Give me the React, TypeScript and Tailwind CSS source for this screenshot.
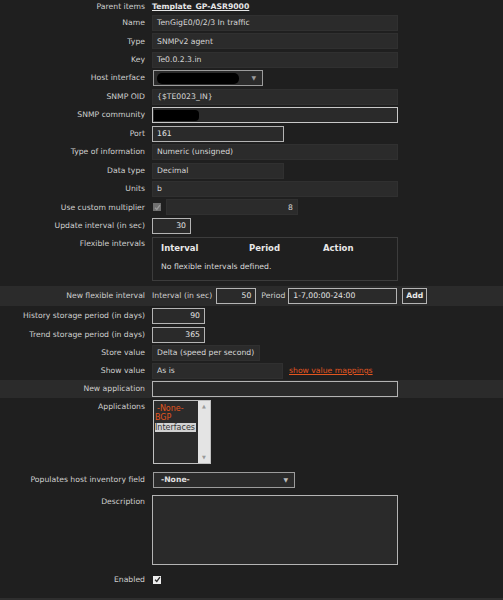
import clsx from 'clsx';
import type { ReactNode } from 'react';

const font = { fontFamily: '"DejaVu Sans", Verdana, sans-serif' };

function Row({
  label,
  top = false,
  className = '',
  children,
}: {
  label: ReactNode;
  top?: boolean;
  className?: string;
  children?: ReactNode;
}) {
  return (
    <div className={clsx('flex shrink-0', top ? 'items-start' : 'items-center', className)}>
      <div className={clsx('w-[145px] shrink-0 text-right text-[#cfcfcf]', top && 'pt-[3px]')}>{label}</div>
      <div className="ml-[7px] flex items-center">{children}</div>
    </div>
  );
}

function ReadOnly({ value, className = '', right = false }: { value: string; className?: string; right?: boolean }) {
  return (
    <div
      className={clsx(
        'flex h-[16px] items-center border border-[#303030] bg-[#2b2b2b] px-[4px] text-[#d6d6d6]',
        right && 'justify-end',
        className,
      )}
    >
      {value}
    </div>
  );
}

function Field({ value = '', className = '', right = false, children }: { value?: string; className?: string; right?: boolean; children?: ReactNode }) {
  return (
    <div
      className={clsx(
        'flex h-[16px] items-center border border-[#b4b4b4] bg-[#2a2a2a] px-[4px] text-[#e4e4e4]',
        right && 'justify-end',
        className,
      )}
    >
      {value}
      {children}
    </div>
  );
}

function Check({ disabled = false }: { disabled?: boolean }) {
  return (
    <div
      className={clsx(
        'flex h-[8px] w-[8px] items-center justify-center',
        disabled ? 'bg-[#6f6f6f]' : 'bg-[#eeeeee]',
      )}
    >
      <svg width="7" height="7" viewBox="0 0 8 8">
        <path d="M1.2 4.2 L3.2 6.2 L6.8 1.4" fill="none" stroke={disabled ? '#9a9a9a' : '#2a2a2a'} strokeWidth="1.5" />
      </svg>
    </div>
  );
}

export default function App() {
  return (
    <div className="h-[600px] w-[503px] overflow-hidden bg-[#1f1f1f] text-[7.7px] leading-none" style={font}>
      <div className="flex flex-col">
        <Row label="Parent items" className="h-[14px]">
          <span className="font-bold text-[#e6e6e6] underline">Template_GP-ASR9000</span>
        </Row>

        <div className="mt-[1px] flex flex-col gap-[2.45px]">
          <Row label="Name" className="h-[16px]">
            <ReadOnly value="TenGigE0/0/2/3 In traffic" className="w-[246px]" />
          </Row>
          <Row label="Type" className="h-[16px]">
            <ReadOnly value="SNMPv2 agent" className="w-[246px]" />
          </Row>
          <Row label="Key" className="h-[16px]">
            <ReadOnly value="Te0.0.2.3.in" className="w-[246px]" />
          </Row>
          <Row label="Host interface" className="h-[16px]">
            <div className="relative ml-[1px] flex h-[16px] w-[110px] items-center border border-[#9c9c9c] bg-[#2b2b2b]">
              <div className="ml-[3px] h-[11px] w-[82px] rounded-[5px] bg-black" />
              <span className="absolute right-[6px] top-[4px] text-[6px] text-[#9a9a9a]">▼</span>
            </div>
          </Row>
          <Row label="SNMP OID" className="h-[16px]">
            <ReadOnly value="{$TE0023_IN}" className="w-[246px]" />
          </Row>
          <Row label="SNMP community" className="h-[16px]">
            <div className="flex h-[16px] w-[246px] items-center border border-[#c8c8c8] bg-[#2a2a2a] pl-[1px]">
              <div className="h-[11px] w-[45px] rounded-r-[4px] bg-black" />
            </div>
          </Row>
          <Row label="Port" className="h-[16px]">
            <Field value="161" className="w-[132px]" />
          </Row>
          <Row label="Type of information" className="h-[16px]">
            <ReadOnly value="Numeric (unsigned)" className="w-[246px]" />
          </Row>
          <Row label="Data type" className="h-[16px]">
            <ReadOnly value="Decimal" className="w-[132px]" />
          </Row>
          <Row label="Units" className="h-[16px]">
            <ReadOnly value="b" className="w-[246px]" />
          </Row>
          <Row label="Use custom multiplier" className="h-[16px]">
            <div className="ml-[1px] flex items-center gap-[5px]">
              <Check disabled />
              <ReadOnly value="8" right className="w-[132px]" />
            </div>
          </Row>
          <Row label="Update interval (in sec)" className="h-[16px]">
            <Field value="30" right className="w-[39px]" />
          </Row>
        </div>

        <Row label="Flexible intervals" top className="mt-[3px]">
          <div className="flex h-[44px] w-[246px] flex-col border border-[#3c3c3c] pl-[8px] pt-[6px]">
            <div className="flex text-[8.5px] font-bold text-[#e8e8e8]">
              <span className="w-[88px]">Interval</span>
              <span className="w-[74px]">Period</span>
              <span>Action</span>
            </div>
            <div className="mt-[11px] text-[#dadada]">No flexible intervals defined.</div>
          </div>
        </Row>

        <Row label="New flexible interval" className="mt-[5px] h-[20px] bg-[#2b2b2b]">
          <span className="text-[#cfcfcf]">Interval (in sec)</span>
          <Field value="50" right className="ml-[4px] w-[40px]" />
          <span className="ml-[5px] text-[#cfcfcf]">Period</span>
          <Field value="1-7,00:00-24:00" className="ml-[3px] w-[109px]" />
          <div className="ml-[5px] flex h-[16px] w-[25px] items-center justify-center border border-[#b4b4b4] bg-[#2b2b2b] font-bold text-[#e8e8e8]">
            Add
          </div>
        </Row>

        <Row label="History storage period (in days)" className="mt-[2px] h-[16px]">
          <Field value="90" right className="w-[53px]" />
        </Row>
        <Row label="Trend storage period (in days)" className="mt-[3px] h-[16px]">
          <Field value="365" right className="w-[53px]" />
        </Row>
        <Row label="Store value" className="mt-[2px] h-[16px]">
          <ReadOnly value="Delta (speed per second)" className="w-[108px]" />
        </Row>
        <Row label="Show value" className="mt-[2px] h-[16px]">
          <ReadOnly value="As is" className="w-[131px]" />
          <span className="ml-[6px] text-[#e2561f] underline">show value mappings</span>
        </Row>
        <Row label="New application" className="mt-[1px] h-[18px] bg-[#2b2b2b]">
          <Field className="w-[246px]" />
        </Row>

        <Row label="Applications" top className="mt-[2px]">
          <div className="ml-[1px] flex h-[64px] w-[58px] border border-[#c0c0c0]">
            <div className="flex w-[44px] flex-col bg-[#2b2b2b] pl-[1px] pt-[3px] text-[8px] leading-[9.5px]">
              <span className="pl-[2px] text-[#e2561f]">-None-</span>
              <span className="text-[#e2561f]">BGP</span>
              <span className="w-fit bg-[#d2d2d2] pr-[1px] text-[#333333]">Interfaces</span>
            </div>
            <div className="flex flex-1 flex-col items-center justify-between bg-[#e4e4e4] py-[3px] text-[5px] text-[#9a9a9a]">
              <span>▲</span>
              <span>▼</span>
            </div>
          </div>
        </Row>

        <Row label="Populates host inventory field" className="mt-[8px] h-[16px]">
          <div className="relative ml-[1px] flex h-[16px] w-[142px] items-center border border-[#9c9c9c] bg-[#2b2b2b] pl-[7px] font-bold text-[#e0e0e0]">
            -None-
            <span className="absolute right-[6px] top-[4px] text-[6px] font-normal text-[#bdbdbd]">▼</span>
          </div>
        </Row>

        <Row label="Description" top className="mt-[7px]">
          <div className="h-[70px] w-[246px] border border-[#b4b4b4] bg-[#2a2a2a]" />
        </Row>

        <Row label="Enabled" className="mt-[7px] h-[16px]">
          <div className="ml-[1px]">
            <Check />
          </div>
        </Row>

        <div className="mt-[10px] h-[2px] bg-[#2e2e2e]" />
      </div>
    </div>
  );
}
